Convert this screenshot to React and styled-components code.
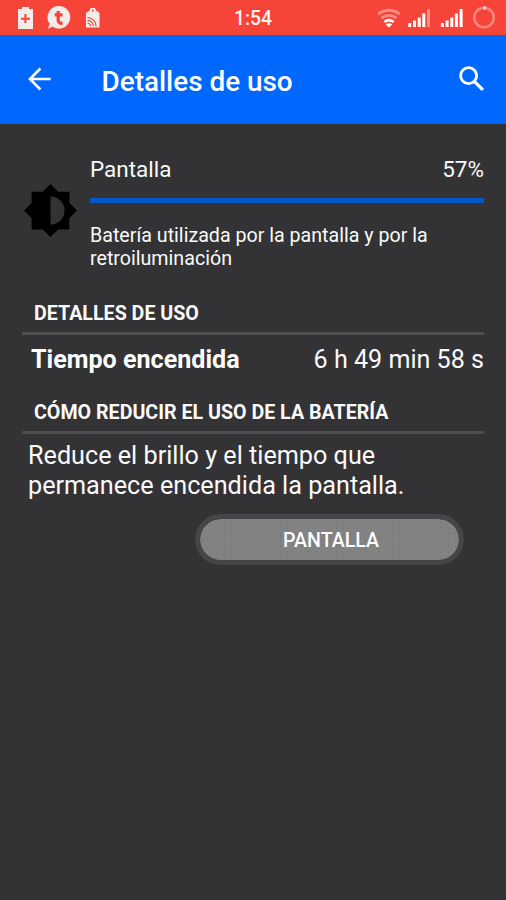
import React from "react";
import styled, { createGlobalStyle } from "styled-components";

const GlobalStyle = createGlobalStyle`
  * { box-sizing: border-box; }
  body { margin: 0; background: #333335; }
`;

const Screen = styled.div`
  width: 506px;
  height: 900px;
  overflow: hidden;
  display: flex;
  flex-direction: column;
  background: #333335;
  border-bottom: 1px solid #352e32;
  color: #fafafa;
  font-family: Roboto, "Liberation Sans", sans-serif;
`;

const StatusBar = styled.header`
  display: grid;
  grid-template-columns: 1fr auto 1fr;
  height: 35px;
  flex: none;
  background: #f64438;
`;

const StatusIcons = styled.svg`
  display: block;
  width: 140px;
  height: 35px;
  justify-self: ${(p) => p.$side};
`;

const Clock = styled.time`
  font-size: 19.4px;
  font-weight: 500;
  line-height: 38px;
  color: #fff3f1;
`;

const AppBar = styled.nav`
  display: flex;
  align-items: center;
  height: 89px;
  flex: none;
  padding: 0 20px 0 26px;
  background: #0068ff;
  color: #fff;
`;

const BarIcon = styled.svg`
  display: block;
  flex: none;
  width: 28px;
  height: 28px;
  margin-bottom: 2px;
`;

const Title = styled.h1`
  flex: 1;
  margin: 4px 0 0 47.5px;
  font-size: 27.9px;
  font-weight: 500;
  line-height: 34px;
`;

const Content = styled.main`
  padding: 32px 22px 0;
`;

const Summary = styled.section`
  display: grid;
  grid-template-columns: 68px 1fr;
`;

const BrightnessIcon = styled.svg`
  display: block;
  width: 53px;
  height: 53px;
  margin: 28px 0 0 2px;
`;

const SummaryHead = styled.div`
  display: flex;
  justify-content: space-between;
  font-size: 22.5px;
  line-height: 27px;
`;

const Meter = styled.div`
  height: 5px;
  margin-top: 15px;
  background: #0658c8;
`;

const Description = styled.p`
  margin: 21px 0 0;
  font-size: 19.65px;
  line-height: 23px;
`;

const SectionTitle = styled.h2`
  margin: ${(p) => p.$gap}px 0 0;
  height: 34px;
  padding: 1px 0 0 12px;
  border-bottom: 3px solid #4e4e50;
  font-size: 19.65px;
  font-weight: 700;
  line-height: 24px;
`;

const DetailRow = styled.div`
  display: flex;
  justify-content: space-between;
  padding: 10px 0 0 9px;
  font-size: 25.1px;
  line-height: 30px;
`;

const DetailName = styled.strong`
  font-weight: 700;
  color: #fff;
`;

const Advice = styled.p`
  margin: 7px 0 0 6px;
  font-size: 25.2px;
  line-height: 29.6px;
`;

const ActionButton = styled.button`
  display: block;
  width: 269px;
  height: 51px;
  margin: 14px 0 0 173px;
  padding: 3px 0 0 3px;
  border: 5.5px solid #464648;
  border-radius: 26px;
  background: radial-gradient(circle, #787878 0.6px, transparent 0.8px) 0 0 / 7px 6px #828282;
  background-clip: padding-box;
  color: #fff;
  font: 500 19.6px/24px Roboto, sans-serif;
`;

const signalBars = [
  { x: 42.3, y: 23, h: 4 },
  { x: 47, y: 20.5, h: 6.5 },
  { x: 51.7, y: 17.5, h: 9.5 },
  { x: 56.3, y: 13.5, h: 13.5 },
  { x: 61, y: 9, h: 18 },
];

function NotificationIcons() {
  return (
    <StatusIcons $side="start" viewBox="0 0 140 35" aria-hidden="true">
      <path fill="#f4ebeb" d="M18 9h4V7h7v2h4v20H18z" />
      <path stroke="#f64438" strokeWidth="2" d="M21 18.7h9M25.4 14v9" />
      <path fill="#f4ebeb" d="M59.2 6a11.3 11.3 0 1 1-6.7 20.6L48 29l1.6-5.2A11.3 11.3 0 0 1 59.2 6z" />
      <path fill="none" stroke="#f64438" strokeWidth="3.3" d="M58.2 11v9.3q0 3.3 4.4 2.9M54.6 14.8h8" />
      <path fill="#f4ebeb" d="M90.5 8h4.5l1 2.5 3.5 2.5v14.5H86V13l3.5-2.5z" />
      <circle cx="92.8" cy="10.8" r="1" fill="#f64438" />
      <g fill="none" stroke="#f64438" strokeWidth="1.1">
        <path d="M87.5 23.2a3 3 0 0 1 3 3M87.5 20.4a5.8 5.8 0 0 1 5.8 5.8M87.5 17.6a8.6 8.6 0 0 1 8.6 8.6" />
      </g>
    </StatusIcons>
  );
}

function ConnectionIcons() {
  return (
    <StatusIcons $side="end" viewBox="0 0 140 35" aria-hidden="true">
      <g fill="none" strokeWidth="2.8">
        <path stroke="#fb8f87" d="M12.3 14Q23 6.5 33.7 14M15.6 18q7.4-5.3 14.8 0" />
        <path stroke="#fff" d="M18.4 22q4.6-3.8 9.2 0" />
      </g>
      <path fill="#fff" d="M23 27.5l-3.2-3.1q3.2-2.2 6.4 0z" />
      <g fill="#fff">
        {signalBars.map((b, i) => (
          <rect key={b.x} x={b.x} y={b.y} width="3" height={b.h} fill={i === 4 ? "#fb8f87" : "#fff"} />
        ))}
        {signalBars.map((b) => (
          <rect key={b.x} x={b.x + 32.6} y={b.y} width="3" height={b.h} />
        ))}
      </g>
      <circle cx="118" cy="17.5" r="9.8" fill="none" stroke="#fb8780" strokeWidth="2.5" />
      <path stroke="#fff" strokeWidth="1.6" d="M118.6 6.3v3.4" />
    </StatusIcons>
  );
}

export default function App() {
  return (
    <>
      <GlobalStyle />
      <Screen>
        <StatusBar>
          <NotificationIcons />
          <Clock>1:54</Clock>
          <ConnectionIcons />
        </StatusBar>
        <AppBar>
          <BarIcon viewBox="0 0 28 28" fill="none" stroke="#fff" strokeWidth="2.6" aria-label="Atrás">
            <path d="M14.4 3.5L4 14l10.4 10.5M4 14h20.7" />
          </BarIcon>
          <Title>Detalles de uso</Title>
          <BarIcon viewBox="0 0 28 28" fill="none" stroke="#fff" strokeWidth="2.8" aria-label="Buscar">
            <circle cx="10.6" cy="10.7" r="8" />
            <path strokeWidth="3.4" d="M16.5 16.6l8.4 8.3" />
          </BarIcon>
        </AppBar>
        <Content>
          <Summary>
            <BrightnessIcon viewBox="0 0 53 53" aria-hidden="true">
              <path d="M26.5 0l7.7 7.7h11.2v11.2L53 26.5l-7.6 7.7v11.2H34.2L26.5 53l-7.7-7.6H7.6V34.2L0 26.5l7.6-7.6V7.7h11.2z" />
              <path fill="#333335" d="M26.5 12.5a14 14 0 0 1 0 28z" />
            </BrightnessIcon>
            <div>
              <SummaryHead>
                <span>Pantalla</span>
                <span>57%</span>
              </SummaryHead>
              <Meter />
              <Description>
                Batería utilizada por la pantalla y por la
                <br />
                retroiluminación
              </Description>
            </div>
          </Summary>
          <SectionTitle $gap={31}>DETALLES DE USO</SectionTitle>
          <DetailRow>
            <DetailName>Tiempo encendida</DetailName>
            <span>6 h 49 min 58 s</span>
          </DetailRow>
          <SectionTitle $gap={25}>CÓMO REDUCIR EL USO DE LA BATERÍA</SectionTitle>
          <Advice>
            Reduce el brillo y el tiempo que
            <br />
            permanece encendida la pantalla.
          </Advice>
          <ActionButton type="button">PANTALLA</ActionButton>
        </Content>
      </Screen>
    </>
  );
}
